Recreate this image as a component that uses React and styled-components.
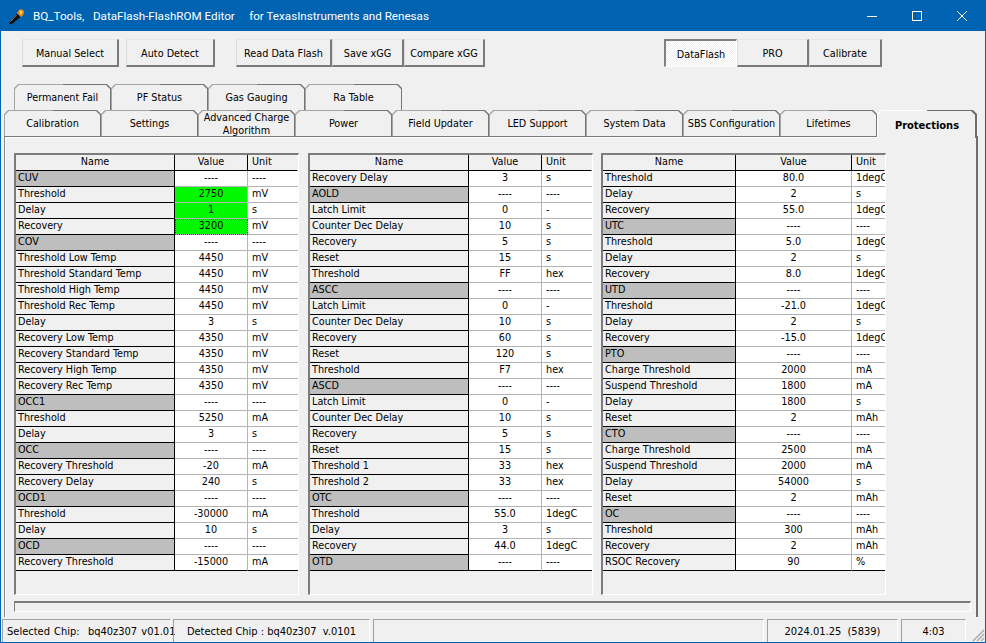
import React from "react";
import styled, { createGlobalStyle } from "styled-components";

const GlobalStyle = createGlobalStyle`
    html, body {
        margin: 0;
        padding: 0;
        background: #f0f0f0;
    }
`;

const col1 = [
    ["CUV"], ["Threshold", "2750", "mV", "hot"], ["Delay", "1", "s", "hot"], ["Recovery", "3200", "mV", "focus"],
    ["COV"], ["Threshold Low Temp", "4450", "mV"], ["Threshold Standard Temp", "4450", "mV"],
    ["Threshold High Temp", "4450", "mV"], ["Threshold Rec Temp", "4450", "mV"], ["Delay", "3", "s"],
    ["Recovery Low Temp", "4350", "mV"], ["Recovery Standard Temp", "4350", "mV"],
    ["Recovery High Temp", "4350", "mV"], ["Recovery Rec Temp", "4350", "mV"],
    ["OCC1"], ["Threshold", "5250", "mA"], ["Delay", "3", "s"],
    ["OCC"], ["Recovery Threshold", "-20", "mA"], ["Recovery Delay", "240", "s"],
    ["OCD1"], ["Threshold", "-30000", "mA"], ["Delay", "10", "s"],
    ["OCD"], ["Recovery Threshold", "-15000", "mA"],
];

const col2 = [
    ["Recovery Delay", "3", "s"],
    ["AOLD"], ["Latch Limit", "0", "-"], ["Counter Dec Delay", "10", "s"], ["Recovery", "5", "s"],
    ["Reset", "15", "s"], ["Threshold", "FF", "hex"],
    ["ASCC"], ["Latch Limit", "0", "-"], ["Counter Dec Delay", "10", "s"], ["Recovery", "60", "s"],
    ["Reset", "120", "s"], ["Threshold", "F7", "hex"],
    ["ASCD"], ["Latch Limit", "0", "-"], ["Counter Dec Delay", "10", "s"], ["Recovery", "5", "s"],
    ["Reset", "15", "s"], ["Threshold 1", "33", "hex"], ["Threshold 2", "33", "hex"],
    ["OTC"], ["Threshold", "55.0", "1degC"], ["Delay", "3", "s"], ["Recovery", "44.0", "1degC"],
    ["OTD"],
];

const col3 = [
    ["Threshold", "80.0", "1degC"], ["Delay", "2", "s"], ["Recovery", "55.0", "1degC"],
    ["UTC"], ["Threshold", "5.0", "1degC"], ["Delay", "2", "s"], ["Recovery", "8.0", "1degC"],
    ["UTD"], ["Threshold", "-21.0", "1degC"], ["Delay", "2", "s"], ["Recovery", "-15.0", "1degC"],
    ["PTO"], ["Charge Threshold", "2000", "mA"], ["Suspend Threshold", "1800", "mA"], ["Delay", "1800", "s"], ["Reset", "2", "mAh"],
    ["CTO"], ["Charge Threshold", "2500", "mA"], ["Suspend Threshold", "2000", "mA"], ["Delay", "54000", "s"], ["Reset", "2", "mAh"],
    ["OC"], ["Threshold", "300", "mAh"], ["Recovery", "2", "mAh"], ["RSOC Recovery", "90", "%"],
];

const backTabs = ["Permanent Fail", "PF Status", "Gas Gauging", "Ra Table"];
const frontTabs = ["Calibration", "Settings", "Advanced Charge Algorithm", "Power", "Field Updater", "LED Support", "System Data", "SBS Configuration", "Lifetimes"];

const Root = styled.div`
    width: 986px;
    height: 643px;
    box-sizing: border-box;
    border: 1px solid #0063b1;
    background: #f0f0f0;
    overflow: hidden;
    display: flex;
    flex-direction: column;
    font-family: "DejaVu Sans Condensed", "DejaVu Sans", sans-serif;
    font-stretch: condensed;
    font-size: 10.75px;
    color: #000;
`;

const TitleBar = styled.div`
    height: 30px;
    flex: none;
    display: flex;
    align-items: center;
    background: #0063b1;
    color: #fff;
    padding-left: 7px;
`;

const TitleText = styled.span`
    margin-left: 8px;
    font-family: Roboto, "Noto Sans", sans-serif;
    font-stretch: normal;
    font-size: 11.65px;
    white-space: pre;
`;

const WindowButtons = styled.div`
    margin-left: auto;
    display: flex;
    padding-right: 1px;
    align-self: stretch;
`;

const WindowButton = styled.div`
    width: 45px;
    display: flex;
    align-items: center;
    justify-content: center;
`;

const Toolbar = styled.div`
    display: flex;
    margin-top: 8px;
    padding: 0 103px 0 21px;
    height: 28px;
    flex: none;
`;

const ButtonGroup = styled.div`
    display: flex;
    margin-left: ${p => p.$gap}px;
    ${p => p.$right ? "margin-left: auto;" : ""}
`;

const Button = styled.div`
    box-sizing: border-box;
    width: ${p => p.$w}px;
    height: 28px;
    display: flex;
    align-items: center;
    justify-content: center;
    padding-top: ${p => p.$down ? 2 : 1}px;
    border-style: solid;
    border-width: ${p => p.$down ? "2px 1px 1px 2px" : "1px 2px 2px 1px"};
    border-color: ${p => p.$down ? "#808080 #fff #fff #808080" : "#e6e6e6 #7a7a7a #7a7a7a #dcdcdc"};
    background-color: #f0f0f0;
    ${p => p.$down ? `
        background-image: conic-gradient(#fff 25%, #f0f0f0 0 50%, #fff 0 75%, #f0f0f0 0);
        background-size: 2px 2px;
    ` : ""}
`;

const TabRow = styled.div`
    display: flex;
    flex: none;
    height: 26px;
    margin-left: ${p => p.$left}px;
    ${p => p.$top ? `margin-top: ${p.$top}px;` : ""}
    position: relative;
    z-index: 1;
`;

const Tab = styled.div`
    position: relative;
    box-sizing: border-box;
    width: ${p => p.$w || 97}px;
    height: ${p => p.$active ? 28 : 26}px;
    display: flex;
    align-items: center;
    justify-content: center;
    text-align: center;
    line-height: 13px;
    padding: ${p => p.$active ? 2 : 1}px 3px 0;
    font-weight: ${p => p.$active ? "bold" : "normal"};
    font-size: ${p => p.$active ? 11 : 10.75}px;
    background: ${p => p.$active
        ? "linear-gradient(90deg, #fff 50%, #6e6e6e 50%)"
        : "linear-gradient(90deg, #a6a6a6 50%, #757575 50%)"};
    clip-path: polygon(4px 0, calc(100% - 4px) 0, 100% 4px, 100% 100%, 0 100%, 0 4px);

    &::before {
        content: "";
        position: absolute;
        inset: 1px ${p => p.$active ? 2 : 1}px 0 1px;
        background: #f0f0f0;
        clip-path: polygon(4px 0, calc(100% - 4px) 0, 100% 4px, 100% 100%, 0 100%, 0 4px);
    }

    span {
        position: relative;
    }
`;

const TabPanel = styled.div`
    box-sizing: border-box;
    flex: none;
    width: 974px;
    height: 481px;
    margin-left: 3px;
    border-style: solid;
    border-width: 1px 2px 0 1px;
    border-color: #7a7a7a #6e6e6e #7a7a7a #8a8a8a;
    box-shadow: inset 1px 1px 0 #fff;
    padding: 16px 0 0 9px;
`;

const Tables = styled.div`
    display: grid;
    grid-template-columns: 294px 293px 285px;
`;

const Table = styled.div`
    box-sizing: border-box;
    width: 285px;
    height: 442px;
    border-style: solid;
    border-width: 2px 1px 1px 2px;
    border-color: #7c7c7c #fff #fff #7c7c7c;
    overflow: hidden;
`;

const Rows = styled.div`
    display: grid;
    grid-template-columns: ${p => p.$cols};
    grid-auto-rows: 16px;
`;

const Cell = styled.div`
    box-sizing: border-box;
    height: 16px;
    line-height: 14px;
    white-space: nowrap;
    overflow: hidden;
    border-bottom: 1px solid #000;
    border-right: 1px solid #000;
`;

const HeadCell = styled(Cell)`
    text-align: center;
    background: #f0f0f0;
    border-right-color: ${p => p.$last ? "#f0f0f0" : "#000"};
    ${p => p.$unit ? "text-align: left; padding-left: 4px;" : ""}
`;

const NameCell = styled(Cell)`
    padding-left: 2px;
    background: ${p => p.$section ? "#bebebe" : "#f0f0f0"};
`;

const ValueCell = styled(Cell)`
    text-align: center;
    background: ${p => p.$hot ? "#00f800" : "#fff"};
    border-bottom-color: ${p => p.$end ? "#000" : "#b4b4b4"};
    border-right-color: #b4b4b4;
    ${p => p.$focus ? "outline: 1px dotted #444; outline-offset: -1px;" : ""}
`;

const UnitCell = styled(Cell)`
    padding-left: 4px;
    background: #fff;
    border-bottom-color: ${p => p.$end ? "#000" : "#b4b4b4"};
    border-right: 0;
`;

const ProgressBar = styled.div`
    box-sizing: border-box;
    width: 957px;
    height: 11px;
    margin-top: 6px;
    border-style: solid;
    border-width: 2px 1px 1px 1px;
    border-color: #7c7c7c #fff #fff #7c7c7c;
`;

const StatusBar = styled.div`
    display: flex;
    flex: 1;
    margin-top: 2px;
    padding-left: 1px;
    font-size: 11px;
`;

const StatusPanel = styled.div`
    box-sizing: border-box;
    width: ${p => p.$w}px;
    margin-right: ${p => p.$gap}px;
    display: flex;
    align-items: center;
    justify-content: ${p => p.$left ? "flex-start" : "center"};
    padding-left: ${p => p.$left ? 4 : 0}px;
    white-space: pre;
    word-spacing: ${p => p.$left ? 1 : 0}px;
    border-style: solid;
    border-width: 1px 1px 0 1px;
    border-color: #a0a0a0 #fff transparent #a0a0a0;
`;

const Grip = styled.svg`
    margin-left: auto;
    align-self: flex-end;
    display: block;
`;

const TorchIcon = () => (
    <svg width="17" height="17" viewBox="0 0 17 17">
        <path d="M1 14.5 L9 5.5 L12.5 9 L4 16 Q1.5 16.5 1 14.5 Z" fill="#111" />
        <path d="M2.5 13.5 L8.5 7" stroke="#8a8a8a" strokeWidth="1" fill="none" />
        <path d="M9 5 L11.5 1.5 Q15 0.5 16 3.5 Q16 7 13 9 Z" fill="#f08a1c" />
        <path d="M11.5 3 Q14 2 14.5 4.5 L12.5 6.5 Z" fill="#ffe04a" />
    </svg>
);

const MinimizeIcon = () => (
    <svg width="10" height="10" viewBox="0 0 10 10">
        <path d="M0 5.5 H10" stroke="#fff" strokeWidth="1" />
    </svg>
);

const MaximizeIcon = () => (
    <svg width="10" height="10" viewBox="0 0 10 10">
        <rect x="0.5" y="0.5" width="9" height="9" fill="none" stroke="#fff" strokeWidth="1" />
    </svg>
);

const CloseIcon = () => (
    <svg width="10" height="10" viewBox="0 0 10 10">
        <path d="M0 0 L10 10 M10 0 L0 10" stroke="#fff" strokeWidth="1" />
    </svg>
);

const DataTable = ({ rows, cols }) => (
    <Table>
        <Rows $cols={cols}>
            <HeadCell>Name</HeadCell>
            <HeadCell>Value</HeadCell>
            <HeadCell $unit $last>Unit</HeadCell>
            {rows.map(([name, value, unit, flag], i) => {
                const section = value === undefined;
                const end = i === rows.length - 1;
                return (
                    <React.Fragment key={i}>
                        <NameCell $section={section}>{name}</NameCell>
                        <ValueCell $end={end} $hot={flag === "hot" || flag === "focus"} $focus={flag === "focus"}>
                            {section ? "----" : value}
                        </ValueCell>
                        <UnitCell $end={end}>{section ? "----" : unit}</UnitCell>
                    </React.Fragment>
                );
            })}
        </Rows>
    </Table>
);

export default function App() {
    return (
        <Root>
            <GlobalStyle />
            <TitleBar>
                <TorchIcon />
                <TitleText>{"BQ_Tools,   DataFlash-FlashROM Editor     for TexasInstruments and Renesas"}</TitleText>
                <WindowButtons>
                    <WindowButton><MinimizeIcon /></WindowButton>
                    <WindowButton><MaximizeIcon /></WindowButton>
                    <WindowButton><CloseIcon /></WindowButton>
                </WindowButtons>
            </TitleBar>

            <Toolbar>
                <Button $w={97}>Manual Select</Button>
                <ButtonGroup $gap={7}>
                    <Button $w={89}>Auto Detect</Button>
                </ButtonGroup>
                <ButtonGroup $gap={21}>
                    <Button $w={96}>Read Data Flash</Button>
                    <Button $w={72}>Save xGG</Button>
                    <Button $w={81}>Compare xGG</Button>
                </ButtonGroup>
                <ButtonGroup $right>
                    <Button $w={73} $down>DataFlash</Button>
                    <Button $w={72}>PRO</Button>
                    <Button $w={73}>Calibrate</Button>
                </ButtonGroup>
            </Toolbar>

            <TabRow $left={13} $top={17}>
                {backTabs.map(t => <Tab key={t}><span>{t}</span></Tab>)}
            </TabRow>
            <TabRow $left={3}>
                {frontTabs.map(t => <Tab key={t}><span>{t}</span></Tab>)}
                <Tab $w={100} $active><span>Protections</span></Tab>
            </TabRow>

            <TabPanel>
                <Tables>
                    <DataTable rows={col1} cols="159px 73px 50px" />
                    <DataTable rows={col2} cols="159px 73px 50px" />
                    <DataTable rows={col3} cols="133px 116px 33px" />
                </Tables>
                <ProgressBar />
            </TabPanel>

            <StatusBar>
                <StatusPanel $w={169} $gap={2} $left>{"Selected Chip:  bq40z307 v01.01"}</StatusPanel>
                <StatusPanel $w={197} $gap={3}>{"Detected Chip : bq40z307  v.0101"}</StatusPanel>
                <StatusPanel $w={391} $gap={3} />
                <StatusPanel $w={131} $gap={3}>{"2024.01.25  (5839)"}</StatusPanel>
                <StatusPanel $w={65} $gap={0}>4:03</StatusPanel>
                <Grip width="14" height="14" viewBox="0 0 14 14">
                    <path d="M13 2 L2 13 M13 6 L6 13 M13 10 L10 13" stroke="#a8a8a8" strokeWidth="1.4" fill="none" />
                </Grip>
            </StatusBar>
        </Root>
    );
}
